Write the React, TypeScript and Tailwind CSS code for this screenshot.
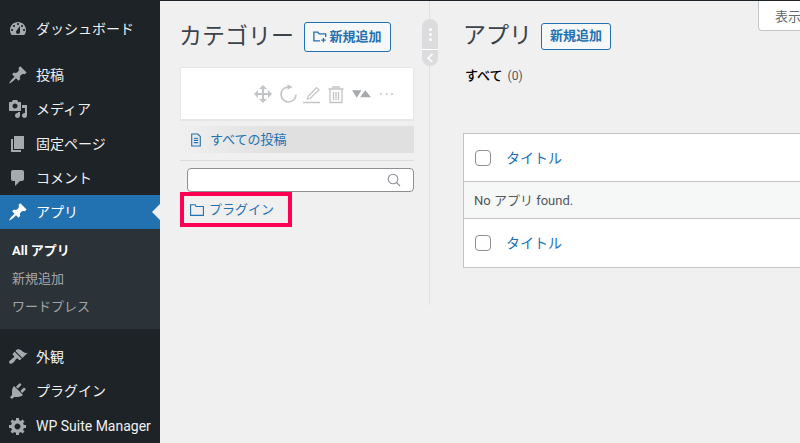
import type { ReactNode } from 'react'

const font = "[font-family:Roboto,'Noto_Sans_CJK_JP',sans-serif]"

const paths: Record<string, string> = {
  dashboard:
    'M3.76 16h12.48c1.1-1.37 1.76-3.11 1.76-5 0-4.42-3.58-8-8-8s-8 3.58-8 8c0 1.89.66 3.63 1.76 5zM10 4c.55 0 1 .45 1 1s-.45 1-1 1-1-.45-1-1 .45-1 1-1zM6 6c.55 0 1 .45 1 1s-.45 1-1 1-1-.45-1-1 .45-1 1-1zm8 0c.55 0 1 .45 1 1s-.45 1-1 1-1-.45-1-1 .45-1 1-1zm-5.37 5.55L12 7v6c0 1.1-.9 2-2 2s-2-.9-2-2c0-.57.24-1.08.63-1.45zM4 10c.55 0 1 .45 1 1s-.45 1-1 1-1-.45-1-1 .45-1 1-1zm12 0c.55 0 1 .45 1 1s-.45 1-1 1-1-.45-1-1 .45-1 1-1z',
  pin: 'M10.44 3.02l1.82-1.82 6.36 6.35-1.83 1.82c-1.05-.68-2.48-.57-3.41.36l-.75.75c-.92.93-1.04 2.35-.35 3.41l-1.83 1.82-2.41-2.41-2.8 2.79c-.42.42-3.38 2.71-3.8 2.29s1.86-3.39 2.28-3.81l2.79-2.79L4.1 9.36l1.83-1.82c1.05.69 2.48.57 3.4-.36l.75-.75c.93-.92 1.05-2.35.36-3.41z',
  media:
    'M13 11V4c0-.55-.45-1-1-1h-1.67L9 1H5L3.67 3H2c-.55 0-1 .45-1 1v7c0 .55.45 1 1 1h10c.55 0 1-.45 1-1zM7 4.5c1.38 0 2.5 1.12 2.5 2.5S8.38 9.5 7 9.5 4.5 8.38 4.5 7 5.62 4.5 7 4.5zM14 6h5v10.5c0 1.38-1.12 2.5-2.5 2.5S14 17.88 14 16.5s1.12-2.5 2.5-2.5c.17 0 .34.02.5.05V9h-3V6zm-4 8.05V13h2v3.5c0 1.38-1.12 2.5-2.5 2.5S7 17.88 7 16.5 8.12 14 9.5 14c.17 0 .34.02.5.05z',
  page: 'M6 15V2h10v13H6zm-1 1h8v2H3V5h2v11z',
  comment: 'M5 2h9c1.1 0 2 .9 2 2v7c0 1.1-.9 2-2 2h-2l-5 5v-5H5c-1.1 0-2-.9-2-2V4c0-1.1.9-2 2-2z',
  brush:
    'M14.48 11.06L7.41 3.99l1.5-1.5c.5-.56 2.3-.47 3.51.32 1.21.8 1.43 1.28 2.91 2.1 1.18.64 2.45 1.26 4.45.85zm-.71.71L6.7 4.7 4.93 6.47c-.39.39-.39 1.02 0 1.41l1.06 1.06c.39.39.39 1.03 0 1.42-.6.6-1.43 1.11-2.21 1.69-.35.26-.7.53-1.01.84C1.43 13.23.4 14.96 1.6 16.17c1.2 1.2 2.95.17 4.28-1.16.3-.31.57-.66.84-1.02.57-.78 1.08-1.61 1.69-2.21.39-.39 1.02-.39 1.41 0l1.06 1.06c.39.39 1.02.39 1.41 0z',
  plug: 'M13.11 4.36L9.87 7.6 8 5.73l3.24-3.24c.35-.34 1.05-.2 1.56.32.52.51.66 1.21.31 1.55zm-8 1.77l.91-1.12 9.01 9.01-1.19.84c-.71.71-2.63 1.16-3.82 1.16H6.14L4.9 17.26c-.59.59-1.54.59-2.12 0-.59-.58-.59-1.53 0-2.12l1.24-1.24v-3.88c0-1.13.4-3.19 1.09-3.89zm7.26 3.97l3.24-3.24c.34-.35 1.04-.21 1.55.31.52.51.66 1.21.31 1.55l-3.24 3.25z',
  gear: 'M18 12h-2.18c-.17.7-.44 1.35-.81 1.93l1.54 1.54-2.1 2.1-1.54-1.54c-.58.36-1.23.63-1.91.79V19H8v-2.18c-.68-.16-1.33-.43-1.91-.79l-1.54 1.54-2.12-2.12 1.54-1.54c-.36-.58-.63-1.23-.79-1.91H1V9.03h2.17c.16-.7.44-1.35.8-1.94L2.43 5.55l2.1-2.1 1.54 1.54c.58-.37 1.24-.64 1.93-.81V2h3v2.18c.68.16 1.33.43 1.91.79l1.54-1.54 2.12 2.12-1.54 1.54c.36.59.64 1.24.8 1.94H18V12zm-8.5 1.5c1.66 0 3-1.34 3-3s-1.34-3-3-3-3 1.34-3 3 1.34 3 3 3z',
}

function Dashicon({ name, className }: { name: string; className: string }) {
  return (
    <svg viewBox="0 0 20 20" className={className} fill="currentColor">
      <path d={paths[name]} fillRule="evenodd" />
    </svg>
  )
}

function MenuItem({ icon, label, active }: { icon: string; label: string; active?: boolean }) {
  return (
    <div className={`relative flex h-[34px] items-center pl-[8px] text-[14px] ${active ? 'bg-[#2271b1] text-white' : 'text-[#f0f0f1]'}`}>
      <Dashicon name={icon} className={`h-[20px] w-[20px] shrink-0 ${active ? 'text-white' : 'text-[#a7aaad]'}`} />
      <span className="ml-[8px] whitespace-nowrap">{label}</span>
      {active && (
        <span className="absolute right-0 top-[9px] h-0 w-0 border-y-[8px] border-r-[8px] border-y-transparent border-r-[#f0f0f1]" />
      )}
    </div>
  )
}

function Sidebar() {
  return (
    <div className="w-[160px] shrink-0 bg-[#1d2327] pt-[11px]">
      <MenuItem icon="dashboard" label="ダッシュボード" />
      <div className="h-[12px]" />
      <MenuItem icon="pin" label="投稿" />
      <MenuItem icon="media" label="メディア" />
      <div className="h-[1px]" />
      <MenuItem icon="page" label="固定ページ" />
      <MenuItem icon="comment" label="コメント" />
      <MenuItem icon="pin" label="アプリ" active />
      <div className="flex h-[100px] flex-col bg-[#2c3338] pt-[8px] text-[13px] text-[#c3c4c7]/80">
        <div className="flex h-[28px] items-center pl-[12px] font-bold text-white">All アプリ</div>
        <div className="flex h-[28px] items-center pl-[12px]">新規追加</div>
        <div className="flex h-[28px] items-center pl-[12px]">ワードプレス</div>
      </div>
      <div className="h-[11px]" />
      <MenuItem icon="brush" label="外観" />
      <MenuItem icon="plug" label="プラグイン" />
      <div className="h-[1px]" />
      <MenuItem icon="gear" label="WP Suite Manager" />
    </div>
  )
}

function AddButton({ icon, w }: { icon?: ReactNode; w: string }) {
  return (
    <div className={`flex items-center justify-center gap-[2px] rounded-[3px] border border-[#2271b1] bg-[#f6f7f7] text-[13px] font-semibold text-[#2271b1] ${w}`}>
      {icon}
      <span>新規追加</span>
    </div>
  )
}

function Toolbar() {
  return (
    <div className="flex h-[53px] items-center border border-[#e8e8e8] bg-white pl-[72px] pt-[1px] text-[#c3c4c7] shadow-[0_1px_1px_rgba(0,0,0,0.04)]">
      <svg viewBox="0 0 20 20" className="h-[20px] w-[20px]" fill="currentColor">
        <path d="M19 10l-4 4v-3h-4v4h3l-4 4-4-4h3v-4H5v3l-4-4 4-4v3h4V5H6l4-4 4 4h-3v4h4V6z" />
      </svg>
      <svg viewBox="0 0 20 20" className="ml-[6px] h-[20px] w-[20px]" fill="none" stroke="currentColor" strokeWidth="1.6">
        <path d="M17 10.500A7.500 7.500 0 1 1 9 3" />
        <path d="M8.500 .2 13.500 3 8.500 5.800z" fill="currentColor" stroke="none" />
      </svg>
      <svg viewBox="0 0 20 20" className="ml-[3px] h-[20px] w-[20px]" fill="none" stroke="currentColor" strokeWidth="1.2">
        <path d="M6 12.500 14.500 3.500 17 6 8 14.500 5.500 15z" />
        <path d="M1 18.500h17" strokeWidth="1.5" />
      </svg>
      <svg viewBox="0 0 20 20" className="ml-[4px] h-[20px] w-[20px]" fill="none" stroke="currentColor" strokeWidth="1.3">
        <path d="M2.500 5h15M7 5V3h6v2M4 5.500V18.500h12V5.500M7.500 8v8M10 8v8M12.500 8v8" />
      </svg>
      <svg viewBox="0 0 20 12" className="ml-[6px] h-[12px] w-[19px] text-[#a7aaad]" fill="currentColor">
        <path d="M0 2h10L5 10zM8.500 9.500 14 2l6 7.500z" />
      </svg>
      <span className="ml-[9px] flex gap-[3.5px]">
        <i className="h-[2px] w-[2px] rounded-full bg-current" />
        <i className="h-[2px] w-[2px] rounded-full bg-current" />
        <i className="h-[2px] w-[2px] rounded-full bg-current" />
      </span>
    </div>
  )
}

function CategoryPane() {
  return (
    <div className="h-[304px] w-[270px] shrink-0 border-r border-r-[#e0e0e0] pl-[20px] pr-[15px] pt-[21px]">
      <div className="flex h-[30px] items-center gap-[10px]">
        <h1 className="-ml-px text-[23px] leading-[30px] text-[#3c434a]">カテゴリー</h1>
        <AddButton
          w="h-[30px] w-[87px]"
          icon={
            <svg viewBox="0 0 16 14" className="h-[14px] w-[14px]" fill="none" stroke="#2271b1" strokeWidth="1.5">
              <path d="M8 11.500H1V1.500h4.500L7 3.500h7.500V7M12 8v5M9.500 10.500h5" />
            </svg>
          }
        />
      </div>
      <div className="mt-[15px]">
        <Toolbar />
      </div>
      <div className="mt-[6px] flex h-[27px] items-center bg-gradient-to-r from-[#f0f0f1] to-[#e0e0e0] to-[40%] pl-[10px] text-[13px] text-[#2271b1]">
        <svg viewBox="0 0 14 16" className="h-[14px] w-[12px]" fill="none" stroke="#2271b1" strokeWidth="1.3">
          <path d="M2 1h7l3 3v11H2zM4.500 6h5M4.500 8.500h5M4.500 11h5" />
        </svg>
        <span className="ml-[8px]">すべての投稿</span>
      </div>
      <div className="mt-[7px] border-t border-t-[#dcdcde]" />
      <div className="ml-[7px] mt-[7px] flex h-[24px] items-center justify-end rounded-[4px] border border-[#8c8f94] bg-white pr-[12px]">
        <svg viewBox="0 0 14 14" className="h-[14px] w-[14px]" fill="none" stroke="#8c8f94" strokeWidth="1.100">
          <circle cx="6" cy="6" r="4.800" />
          <path d="M9.500 9.500 13 13" />
        </svg>
      </div>
      <div className="flex h-[35px] w-[112px] items-center border-[4px] border-[#ff0055] pl-[6px] text-[13px] text-[#2271b1]">
        <svg viewBox="0 0 14 12" className="h-[12px] w-[14px]" fill="none" stroke="#2271b1" strokeWidth="1.100">
          <path d="M.6 11.400V.8h4.500l1 1.700h7.300v8.900z" />
        </svg>
        <span className="ml-[5px]">プラグイン</span>
      </div>
    </div>
  )
}

function TitleRow({ h, border }: { h: string; border?: boolean }) {
  return (
    <div className={`flex items-center pl-[11px] text-[14px] text-[#2271b1] ${h} ${border ? 'border-b border-b-[#c3c4c7]' : 'pb-[1px]'}`}>
      <span className="h-[16px] w-[16px] rounded-[4px] border border-[#8c8f94] bg-white" />
      <span className="ml-[15px] pt-[2px]">タイトル</span>
    </div>
  )
}

function ListPane() {
  return (
    <div className="min-w-0 flex-1 pl-[33px] pt-[21px]">
      <div className="flex h-[28px] items-center gap-[9px]">
        <h1 className="text-[23px] leading-[28px] text-[#3c434a]">アプリ</h1>
        <AddButton w="h-[27px] w-[70px]" />
      </div>
      <div className="ml-[2px] mt-[17px] text-[13px] leading-[18px]">
        <span className="font-medium text-black">すべて</span>
        <span className="ml-[5px] text-[12px] text-[#50575e]">(0)</span>
      </div>
      <div className="mt-[48px] w-[400px] border border-[#c3c4c7] bg-white">
        <TitleRow h="h-[48px]" border />
        <div className="flex h-[37px] items-center border-b border-b-[#c3c4c7] bg-[#f6f7f7] pl-[10px] pt-[1px] text-[13px] text-[#50575e]">No アプリ found.</div>
        <TitleRow h="h-[48px]" />
      </div>
    </div>
  )
}

export default function App() {
  return (
    <div className={`relative flex h-[443px] w-[800px] overflow-hidden border-t border-t-[#1d2327] bg-[#f0f0f1] ${font}`}>
      <Sidebar />
      <CategoryPane />
      <ListPane />
      <div className="absolute left-[422px] top-[18px] flex h-[47px] w-[16px] flex-col overflow-hidden rounded-[8px] bg-[#dcdcde]">
        <div className="flex h-[30px] flex-col items-center justify-center gap-[2px]">
          <i className="h-[3px] w-[3px] rounded-full bg-white" />
          <i className="h-[3px] w-[3px] rounded-full bg-white" />
          <i className="h-[3px] w-[3px] rounded-full bg-white" />
        </div>
        <div className="flex flex-1 items-center justify-center border-t border-t-white">
          <svg viewBox="0 0 8 10" className="h-[10px] w-[8px]" fill="none" stroke="white" strokeWidth="1.500">
            <path d="M6.500 1 2 5l4.500 4" />
          </svg>
        </div>
      </div>
      <div className="absolute left-[758px] top-[-1px] h-[31px] w-[60px] rounded-b-[4px] border border-[#c3c4c7] border-t-0 bg-white pl-[16px] pt-[7px] text-[13px] text-[#646970]">
        表示
      </div>
    </div>
  )
}
